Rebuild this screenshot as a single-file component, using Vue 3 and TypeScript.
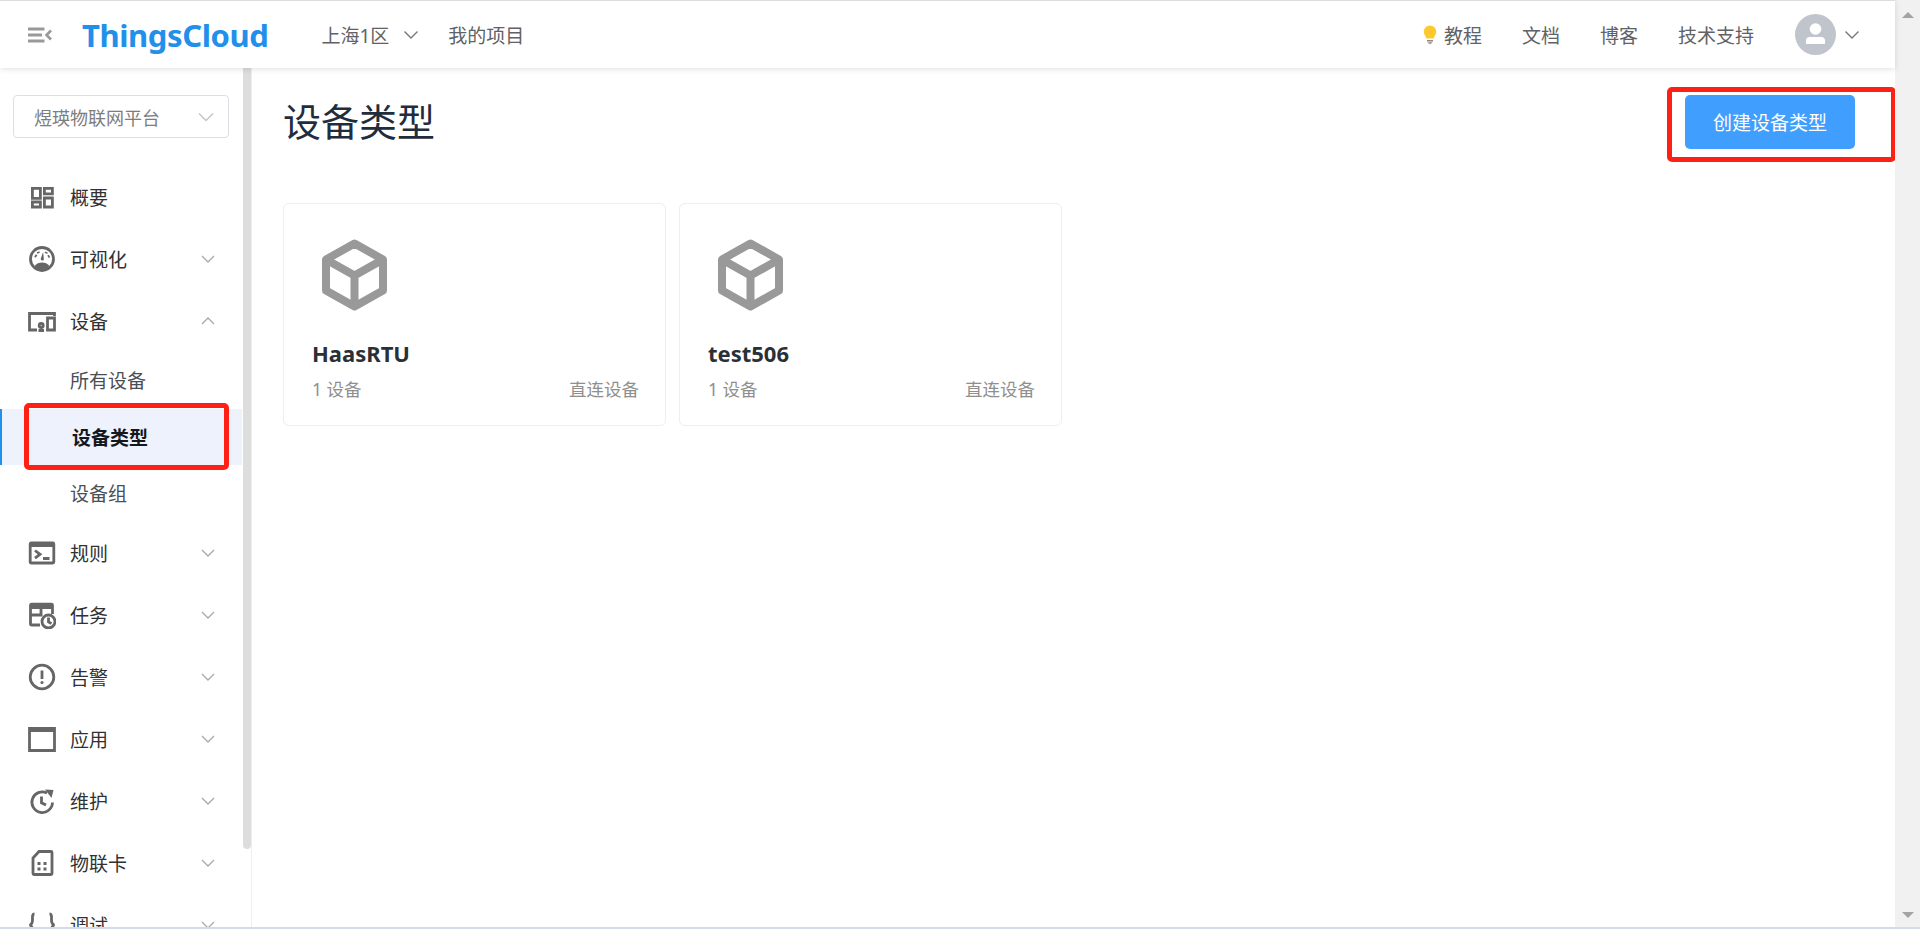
<script setup lang="ts">
interface MenuChild {
  label: string
  active?: boolean
}

interface IconPart {
  d: string
  solid?: boolean
}

interface MenuItem {
  label: string
  icon: IconPart[]
  arrow?: 'down' | 'up'
  children?: MenuChild[]
}

const menu: MenuItem[] = [
  {
    label: '概要',
    icon: [{ d: 'M4.400 5.400h8v10h-8zM16.400 5.400h8v5.500h-8zM4.400 19h8v5h-8zM16.400 15h8v9h-8z' }]
  },
  {
    label: '可视化',
    arrow: 'down',
    icon: [
      { d: 'M25.500 14a11.500 11.500 0 1 1-23 0a11.500 11.500 0 1 1 23 0z' },
      { d: 'M6.500 21c2-2.500 4.500-3.500 7.500-3.500s5.500 1 7.500 3.500l-3 3.500h-9z', solid: true },
      { d: 'M12.800 13.500l2.300-6.500l.8 7.200a1.500 1.500 0 0 1-3.100-.7z', solid: true },
      { d: 'M7 10.500l1.500 1M10 6.800l.6 1.400M18.500 7l-.6 1.400M21.500 11l-1.500.8' }
    ]
  },
  {
    label: '设备',
    arrow: 'up',
    icon: [
      { d: 'M9 23H1.500V6.500h25V9' },
      { d: 'M19.500 11h7v12h-7zM11.200 18.500a2 2 0 1 0 4 0a2 2 0 1 0-4 0zM10.500 23.500h5.500' }
    ],
    children: [{ label: '所有设备' }, { label: '设备类型', active: true }, { label: '设备组' }]
  },
  {
    label: '规则',
    arrow: 'down',
    icon: [
      { d: 'M3.200 4h21.600a1 1 0 0 1 1 1v18a1 1 0 0 1-1 1H3.200a1 1 0 0 1-1-1V5a1 1 0 0 1 1-1z' },
      { d: 'M2.500 3.500h23v4.500h-23z', solid: true },
      { d: 'M7 11.500l5 3.800l-5 3.800M15 19.500h6.500' }
    ]
  },
  {
    label: '任务',
    arrow: 'down',
    icon: [
      { d: 'M12 24H3.500a1 1 0 0 1-1-1V4.200a1 1 0 0 1 1-1h20a1 1 0 0 1 1 1V13M2.500 14h12M13 8v7' },
      { d: 'M2.500 3h22v5h-22z', solid: true },
      { d: 'M27 20.500a6.500 6.500 0 1 1-13 0a6.500 6.500 0 1 1 13 0zM20.500 16.500v4.500l3 1.500' }
    ]
  },
  {
    label: '告警',
    arrow: 'down',
    icon: [
      { d: 'M25.800 14a11.800 11.800 0 1 1-23.600 0a11.800 11.800 0 1 1 23.600 0z' },
      { d: 'M14 7.500v8.500' },
      { d: 'M12.400 19.500a1.600 1.600 0 1 0 3.200 0a1.600 1.600 0 1 0-3.200 0z', solid: true }
    ]
  },
  {
    label: '应用',
    arrow: 'down',
    icon: [
      { d: 'M1.500 3.500h25v22h-25z' },
      { d: 'M1 2h26v5H1z', solid: true }
    ]
  },
  {
    label: '维护',
    arrow: 'down',
    icon: [
      { d: 'M24.500 15.500a10.300 10.300 0 1 1-5.500-9.400' },
      { d: 'M17 2.500l8.500.6l-2 8z', solid: true },
      { d: 'M13.500 9.500v6.300l4.500 2.300' }
    ]
  },
  {
    label: '物联卡',
    arrow: 'down',
    icon: [
      { d: 'M11 2.500h12a1 1 0 0 1 1 1v21a1 1 0 0 1-1 1H6a1 1 0 0 1-1-1V9z' },
      { d: 'M9.500 13h3v3h-3zM15.500 13h3v3h-3zM9.500 18.500h3v3h-3zM15.500 18.500h3v3h-3z', solid: true }
    ]
  },
  {
    label: '调试',
    arrow: 'down',
    icon: [
      { d: 'M6.500 3C4 3 4.500 6 4.500 9c0 3-.5 4.500-3 5c2.500.5 3 2 3 5c0 3-.5 6 2 6' },
      { d: 'M21.500 3C24 3 23.500 6 23.500 9c0 3 .5 4.500 3 5c-2.500.5-3 2-3 5c0 3 .5 6-2 6' }
    ]
  }
]

const navLinks = ['文档', '博客', '技术支持']

const deviceTypes = [
  { name: 'HaasRTU', count: '1 设备', kind: '直连设备' },
  { name: 'test506', count: '1 设备', kind: '直连设备' }
]
</script>

<template>
  <div class="page">
    <div class="viewport">
      <header class="topbar">
        <svg class="fold" viewBox="0 0 24 16" width="24" height="16">
          <path d="M0 2h16.500M0 8h14M0 14h16.500" fill="none" stroke="#999" stroke-width="3" />
          <path d="M23 3.500L18.500 8l4.500 4.500" fill="none" stroke="#999" stroke-width="2.600" />
        </svg>
        <span class="logo">ThingsCloud</span>
        <span class="nav-item region">上海1区</span>
        <svg class="chevron region-arrow" viewBox="0 0 16 10" width="16" height="10">
          <path d="M1.500 1.500L8 8l6.500-6.500" />
        </svg>
        <span class="nav-item project">我的项目</span>
        <div class="topbar-right">
          <span class="nav-item tutorial">
            <svg viewBox="0 0 14 20" width="14" height="20">
              <path d="M7 .5a6.300 6.300 0 0 0-6.300 6.300c0 2.700 2 4 2.700 6.700h7.200c.7-2.700 2.700-4 2.700-6.700A6.300 6.300 0 0 0 7 .5z" fill="#fdc92d" />
              <path d="M4 15h6v1.500H4zM4.800 17.300h4.400v1H8l-1 1.200l-1-1.200H4.800z" fill="#8a8a8a" />
            </svg>
            教程
          </span>
          <span v-for="link in navLinks" :key="link" class="nav-item">{{ link }}</span>
          <span class="avatar">
            <svg viewBox="0 0 41 41" width="41" height="41">
              <circle cx="20.500" cy="15" r="5.800" fill="#fff" />
              <path d="M11 30v-3.500c0-2 1.500-3.500 3.500-3.500h12c2 0 3.500 1.500 3.500 3.500V30z" fill="#fff" />
            </svg>
          </span>
          <svg class="chevron avatar-arrow" viewBox="0 0 16 10" width="16" height="10">
            <path d="M1.500 1.500L8 8l6.500-6.500" />
          </svg>
        </div>
      </header>

      <div class="body">
        <aside class="sidebar">
          <div class="project-select">
            <span>煜瑛物联网平台</span>
            <svg class="select-arrow" viewBox="0 0 16 10" width="16" height="10">
              <path d="M1 1.500L8 8.500l7-7" />
            </svg>
          </div>

          <template v-for="item in menu" :key="item.label">
            <div class="menu-item">
              <svg class="menu-icon" viewBox="0 0 28 28" width="28" height="28">
                <path
                  v-for="(part, i) in item.icon"
                  :key="i"
                  :d="part.d"
                  :class="part.solid ? 'solid' : 'line'"
                />
              </svg>
              <span>{{ item.label }}</span>
              <svg v-if="item.arrow" class="menu-arrow" viewBox="0 0 14 8" width="14" height="8">
                <path :d="item.arrow === 'down' ? 'M1 1l6 6l6-6' : 'M1 7l6-6l6 6'" />
              </svg>
            </div>
            <div v-if="item.children" class="submenu">
              <div
                v-for="child in item.children"
                :key="child.label"
                class="submenu-item"
                :class="{ 'is-active': child.active }"
              >
                {{ child.label }}
                <span v-if="child.active" class="mark mark-menu"></span>
              </div>
            </div>
          </template>

          <div class="sidebar-thumb"></div>
        </aside>

        <main class="content">
          <div class="content-head">
            <h1>设备类型</h1>
            <button class="create-btn" type="button">
              创建设备类型
              <span class="mark mark-btn"></span>
            </button>
          </div>

          <div class="cards">
            <div v-for="card in deviceTypes" :key="card.name" class="card">
              <svg class="cube" viewBox="0 0 65 72" width="65" height="72">
                <path d="M32.500 4.500L61 20.500V51.500L32.500 67.500L4 51.500V20.500z" />
                <path d="M4 20.500L32.500 36.500L61 20.500M32.500 36.500V67.500" />
              </svg>
              <div class="card-name">{{ card.name }}</div>
              <div class="card-meta">
                <span>{{ card.count }}</span>
                <span>{{ card.kind }}</span>
              </div>
            </div>
          </div>
        </main>
      </div>
    </div>

    <div class="page-scrollbar">
      <span class="tri tri-up"></span>
      <span class="tri tri-down"></span>
    </div>
  </div>
  <div class="page-bottom"></div>
</template>

<style>
html,
body {
  margin: 0;
  height: 100%;
  overflow: hidden;
  background: #fff;
}
</style>

<style scoped>
.page {
  display: flex;
  height: 927px;
  font-family: "Noto Sans", "Noto Sans CJK SC", sans-serif;
  color: #303133;
  overflow: hidden;
}

.viewport {
  flex: 1;
  min-width: 0;
  display: flex;
  flex-direction: column;
}

.page-bottom {
  height: 2px;
  background: #d3dbe8;
}

.topbar {
  position: relative;
  z-index: 2;
  flex: none;
  display: flex;
  align-items: center;
  height: 67px;
  border-top: 1px solid #dcdcdc;
  background: #fff;
  box-shadow: 0 1px 6px rgba(0, 0, 0, 0.13);
}

.fold {
  margin-left: 28px;
}

.logo {
  margin-left: 30px;
  font-size: 31px;
  font-weight: 700;
  color: #2290ea;
  letter-spacing: -0.4px;
}

.nav-item {
  font-size: 19px;
  color: #606266;
  white-space: nowrap;
}

.region {
  margin-left: 53px;
}

.chevron path {
  fill: none;
  stroke: #777;
  stroke-width: 1.4;
}

.region-arrow {
  margin-left: 14px;
}

.project {
  margin-left: 29px;
}

.topbar-right {
  margin-left: auto;
  display: flex;
  align-items: center;
  gap: 40px;
  padding-right: 35px;
}

.tutorial {
  display: flex;
  align-items: center;
  gap: 7px;
}

.avatar {
  width: 41px;
  height: 41px;
  margin-left: 1px;
  border-radius: 50%;
  background: #c0c4cc;
}

.avatar svg {
  display: block;
}

.avatar-arrow {
  margin-left: -32px;
}

.body {
  flex: 1;
  min-height: 0;
  display: flex;
}

.sidebar {
  position: relative;
  flex: none;
  box-sizing: border-box;
  width: 252px;
  padding-top: 27px;
  padding-right: 9px;
  border-right: 1px solid #eeeeee;
  overflow: hidden;
}

.sidebar-thumb {
  position: absolute;
  top: 0;
  right: 0;
  width: 8px;
  height: 781px;
  border-radius: 0 0 4px 4px;
  background: #dddddd;
}

.project-select {
  box-sizing: border-box;
  display: flex;
  align-items: center;
  justify-content: space-between;
  width: 216px;
  height: 43px;
  margin: 0 0 28px 13px;
  padding: 0 14px 0 20px;
  border: 1px solid #dcdfe6;
  border-radius: 4px;
  font-size: 18px;
  color: #7d7d7d;
}

.select-arrow path {
  fill: none;
  stroke: #c0c4cc;
  stroke-width: 1.4;
}

.menu-item {
  display: flex;
  align-items: center;
  height: 62px;
  padding-left: 28px;
  font-size: 19px;
  color: #303133;
}

.menu-icon {
  flex: none;
  margin-right: 14px;
}

.menu-icon .line {
  fill: none;
  stroke: #666;
  stroke-width: 2.8;
}

.menu-icon .solid {
  fill: #666;
}

.menu-arrow {
  margin-left: auto;
  margin-right: 27px;
}

.menu-arrow path {
  fill: none;
  stroke: #a6a9ad;
  stroke-width: 1.3;
}

.submenu {
  padding-bottom: 1px;
}

.submenu-item {
  position: relative;
  display: flex;
  align-items: center;
  box-sizing: border-box;
  height: 56px;
  padding-left: 70px;
  font-size: 19px;
  color: #4a4f57;
}

.submenu-item.is-active {
  margin-top: 1px;
  font-weight: 700;
  color: #14181c;
  background: #edf2fc;
  border-left: 2px solid #2290ea;
}

.mark {
  position: absolute;
  box-sizing: border-box;
  border: 5px solid #ff2015;
  border-radius: 5px;
  pointer-events: none;
}

.mark-menu {
  top: -6px;
  left: 22px;
  width: 205px;
  height: 67px;
}

.mark-btn {
  top: -8px;
  left: -18px;
  width: 229px;
  height: 75px;
}

.content {
  flex: 1;
  min-width: 0;
  box-sizing: border-box;
  padding: 27px 40px 0 31px;
}

.content-head {
  display: flex;
  align-items: flex-start;
  justify-content: space-between;
  height: 108px;
}

.content-head h1 {
  margin: 0;
  font-size: 38px;
  font-weight: 400;
  line-height: 52px;
  color: #1f2d3d;
}

.create-btn {
  position: relative;
  width: 170px;
  height: 54px;
  padding: 0;
  border: none;
  border-radius: 5px;
  background: #409eff;
  color: #fff;
  font-family: inherit;
  font-size: 19px;
}

.cards {
  display: flex;
  gap: 13px;
}

.card {
  box-sizing: border-box;
  width: 383px;
  height: 223px;
  padding: 35px 26px 0 28px;
  border: 1px solid #eceef2;
  border-radius: 6px;
}

.cube {
  display: block;
  margin-left: 10px;
}

.cube path {
  fill: none;
  stroke: #999;
  stroke-width: 8;
  stroke-linejoin: round;
}

.card-name {
  margin-top: 27px;
  font-size: 22px;
  font-weight: 700;
  line-height: 30px;
  color: #2b2f36;
}

.card-meta {
  display: flex;
  justify-content: space-between;
  margin-top: 8px;
  font-size: 17.500px;
  line-height: 26px;
  color: #8f8f8f;
}

.page-scrollbar {
  position: relative;
  flex: none;
  width: 25px;
  background: #f1f1f1;
}

.tri {
  position: absolute;
  left: 7px;
  width: 0;
  height: 0;
  border-left: 6px solid transparent;
  border-right: 6px solid transparent;
}

.tri-up {
  top: 12px;
  border-bottom: 6px solid #a3a3a3;
}

.tri-down {
  bottom: 9px;
  border-top: 6px solid #a3a3a3;
}
</style>
